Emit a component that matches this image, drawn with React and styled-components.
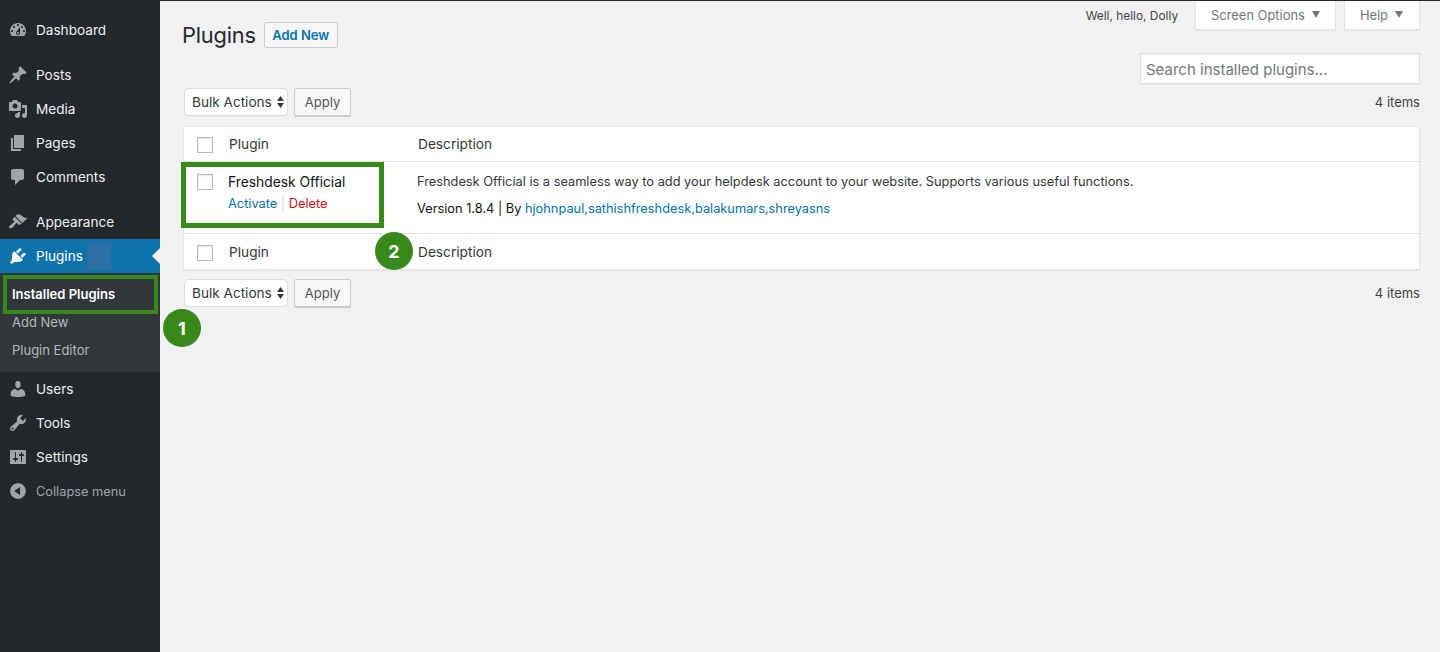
import React from 'react';
import styled, { createGlobalStyle } from 'styled-components';

const GlobalStyle = createGlobalStyle`
  html, body {
    margin: 0;
    padding: 0;
    background: #f1f1f1;
  }
  body {
    font-family: Inter, "Liberation Sans", sans-serif;
    color: #444;
    -webkit-font-smoothing: antialiased;
  }
  * {
    box-sizing: border-box;
  }
`;

const ICONS = {
  dashboard:
    'M3.76 16h12.48c1.1-1.37 1.76-3.11 1.76-5 0-4.42-3.58-8-8-8s-8 3.58-8 8c0 1.89.66 3.63 1.76 5zM10 4c.55 0 1 .45 1 1s-.45 1-1 1-1-.45-1-1 .45-1 1-1zM6 6c.55 0 1 .45 1 1s-.45 1-1 1-1-.45-1-1 .45-1 1-1zm8 0c.55 0 1 .45 1 1s-.45 1-1 1-1-.45-1-1 .45-1 1-1zm-5.37 5.55L12 7v6c0 1.1-.9 2-2 2s-2-.9-2-2c0-.57.24-1.08.63-1.45zM4 10c.55 0 1 .45 1 1s-.45 1-1 1-1-.45-1-1 .45-1 1-1zm12 0c.55 0 1 .45 1 1s-.45 1-1 1-1-.45-1-1 .45-1 1-1zm-5 3c0-.55-.45-1-1-1s-1 .45-1 1 .45 1 1 1 1-.45 1-1z',
  posts:
    'M10.44 3.02l1.82-1.82 6.36 6.35-1.83 1.82c-1.05-.68-2.48-.57-3.41.36l-.75.75c-.92.93-1.04 2.35-.35 3.41l-1.83 1.82-2.41-2.41-2.8 2.79c-.42.42-3.38 2.71-3.8 2.29s1.86-3.39 2.28-3.81l2.79-2.79L4.1 9.36l1.83-1.82c1.05.69 2.48.57 3.4-.36l.75-.75c.93-.92 1.05-2.35.36-3.41z',
  media:
    'M13 11V4c0-.55-.45-1-1-1h-1.67L9 1H5L3.67 3H2c-.55 0-1 .45-1 1v7c0 .55.45 1 1 1h10c.55 0 1-.45 1-1zM7 4.5c1.38 0 2.5 1.12 2.5 2.5S8.38 9.5 7 9.5 4.5 8.38 4.5 7 5.62 4.5 7 4.5zM14 6h5v10.5c0 1.38-1.12 2.5-2.5 2.5S14 17.88 14 16.5s1.12-2.5 2.5-2.5c.17 0 .34.02.5.05V9h-3V6zm-4 8.05V13h2v3.5c0 1.38-1.12 2.5-2.5 2.5S7 17.88 7 16.5 8.12 14 9.5 14c.17 0 .34.02.5.05z',
  pages: 'M6 15V2h10v13H6zm-1 1h8v2H3V5h2v11z',
  comments:
    'M5 2h9c1.1 0 2 .9 2 2v7c0 1.1-.9 2-2 2h-2l-5 5v-5H5c-1.1 0-2-.9-2-2V4c0-1.1.9-2 2-2z',
  appearance:
    'M14.48 11.06L7.41 3.99l1.5-1.5c.5-.56 2.3-.47 3.51.32 1.21.8 1.43 1.28 2.91 2.1 1.18.64 2.45 1.26 4.45.85zm-.71.71L6.7 4.7 4.93 6.47c-.39.39-.39 1.02 0 1.41l1.06 1.06c.39.39.39 1.03 0 1.42-.6.6-1.43 1.11-2.21 1.69-.35.26-.7.53-1.01.84C1.43 13.23.4 14.99 1.4 15.99c.99 1 2.76-.03 4.09-1.36.31-.31.58-.66.84-1.01.58-.78 1.09-1.61 1.69-2.21.39-.39 1.02-.39 1.41 0l1.06 1.06c.39.39 1.02.39 1.41 0z',
  plugins:
    'M13.11 4.36L9.87 7.6 8 5.73l3.24-3.24c.35-.34 1.05-.2 1.56.32.52.51.66 1.21.31 1.55zm-8 1.77l.91-1.12 9.01 9.01-1.19.84c-.71.71-2.63 1.16-3.82 1.16H6.14L4.9 17.26c-.59.59-1.54.59-2.12 0-.59-.58-.59-1.53 0-2.12l1.24-1.24v-3.88c0-1.13.4-3.19 1.09-3.89zm7.26 3.97l3.24-3.24c.34-.35 1.04-.21 1.55.31.52.51.66 1.21.31 1.55l-3.24 3.25z',
  users:
    'M10 9.25c-2.27 0-2.73-3.44-2.73-3.44C7 4.02 7.82 2 9.97 2c2.16 0 2.98 2.02 2.71 3.81 0 0-.41 3.44-2.68 3.44zm0 2.57L12.72 10c2.39 0 4.52 2.33 4.52 4.53v2.49s-3.65 1.13-7.24 1.13c-3.65 0-7.24-1.13-7.24-1.13v-2.49c0-2.25 1.94-4.48 4.47-4.48z',
  tools:
    'M16.68 9.77c-1.34 1.34-3.3 1.67-4.95.99l-5.41 6.52c-.99.99-2.59.99-3.58 0s-.99-2.59 0-3.57l6.52-5.42c-.68-1.65-.35-3.61.99-4.95 1.28-1.28 3.12-1.62 4.72-1.06l-2.89 2.89 2.82 2.82 2.86-2.87c.53 1.58.18 3.39-1.08 4.65zM3.81 16.21c.4.39 1.04.39 1.43 0 .4-.4.4-1.04 0-1.43-.39-.4-1.03-.4-1.43 0-.39.39-.39 1.03 0 1.43z',
  settings:
    'M18 16V4c0-.55-.45-1-1-1H3c-.55 0-1 .45-1 1v12c0 .55.45 1 1 1h14c.55 0 1-.45 1-1zM8 11h1c.55 0 1 .45 1 1s-.45 1-1 1H8v1.5c0 .28-.22.5-.5.5s-.5-.22-.5-.5V13H6c-.55 0-1-.45-1-1s.45-1 1-1h1V5.5c0-.28.22-.5.5-.5s.5.22.5.5V11zm5-2h-1c-.55 0-1-.45-1-1s.45-1 1-1h1V5.5c0-.28.22-.5.5-.5s.5.22.5.5V7h1c.55 0 1 .45 1 1s-.45 1-1 1h-1v5.5c0 .28-.22.5-.5.5s-.5-.22-.5-.5V9z',
  collapse:
    'M10 2.16c4.33 0 7.84 3.51 7.84 7.84s-3.51 7.84-7.84 7.84S2.16 14.33 2.16 10 5.71 2.16 10 2.16zm2 11.72V6.12L6.18 9.97z',
};

const GREEN = '#37891a';

const Page = styled.div`
  display: flex;
  min-height: 652px;
  border-top: 1px solid #23282d;
`;

const Sidebar = styled.nav`
  flex: 0 0 160px;
  padding-top: 12px;
  background: #23282d;
`;

const MenuGroup = styled.div`
  margin-bottom: 11px;
`;

const MenuItem = styled.div`
  position: relative;
  display: flex;
  align-items: center;
  height: 34px;
  padding-left: 8px;
  font-size: ${(p) => (p.$muted ? '12.8px' : '13.6px')};
  color: ${(p) => (p.$muted ? '#a0a5aa' : p.$active ? '#fff' : '#eee')};
  background: ${(p) => (p.$active ? '#0f72aa' : 'transparent')};
`;

const MenuIcon = styled.svg`
  flex: 0 0 20px;
  width: 20px;
  height: 20px;
  margin-right: 8px;
  fill: ${(p) => (p.$active ? '#fff' : '#a0a5aa')};
`;

const CountMask = styled.span`
  position: absolute;
  top: 4px;
  left: 87px;
  width: 24px;
  height: 27px;
  background: #2c6ea6;
`;

const ActiveArrow = styled.span`
  position: absolute;
  top: 50%;
  right: 0;
  margin-top: -8px;
  border: 8px solid transparent;
  border-right-color: #f1f1f1;
  border-left-width: 0;
`;

const Submenu = styled.div`
  position: relative;
  padding: 7px 0 8px;
  background: #32373c;
`;

const SubItem = styled.div`
  display: flex;
  align-items: center;
  height: 28px;
  padding-left: 12px;
  font-size: 13px;
  font-weight: ${(p) => (p.$current ? 600 : 400)};
  color: ${(p) => (p.$current ? '#fff' : '#b4b9be')};
`;

const Highlight = styled.div`
  position: absolute;
  border-style: solid;
  border-color: ${GREEN};
  pointer-events: none;
`;

const SubHighlight = styled(Highlight)`
  top: 2px;
  left: 3px;
  width: 155px;
  height: 39px;
  border-width: 4px;
`;

const RowHighlight = styled(Highlight)`
  top: 0;
  left: -3px;
  width: 203px;
  height: 66px;
  border-width: 5px;
`;

const Badge = styled.div`
  position: absolute;
  top: ${(p) => p.$top}px;
  left: ${(p) => p.$left}px;
  display: flex;
  align-items: center;
  justify-content: center;
  width: 38px;
  height: 38px;
  border-radius: 50%;
  font-size: 18px;
  font-weight: 700;
  color: #fff;
  background: ${GREEN};
`;

const Content = styled.main`
  position: relative;
  flex: 1;
  padding: 0 20px 0 23px;
`;

const ScreenMeta = styled.div`
  position: absolute;
  top: 0;
  right: 20px;
  display: flex;
  align-items: flex-start;
`;

const Greeting = styled.span`
  margin: 8px 17px 0 0;
  font-size: 11.9px;
  line-height: 14px;
  color: #444;
`;

const MetaTab = styled.div`
  display: flex;
  align-items: center;
  height: 29px;
  margin-left: ${(p) => (p.$gap ? '8px' : 0)};
  padding: 0 ${(p) => (p.$gap ? '16px' : '15px')} 0 15px;
  font-size: 12.9px;
  color: #72777c;
  background: #fff;
  border: 1px solid #e5e5e5;
  border-top: 0;
  box-shadow: 0 1px 1px rgba(0, 0, 0, 0.04);
`;

const Caret = styled.span`
  margin-left: 7px;
  margin-top: -2px;
  border: 4px solid transparent;
  border-top: 7px solid #72777c;
  border-bottom: 0;
`;

const TitleRow = styled.div`
  display: flex;
  align-items: center;
  height: 26px;
  margin: 21px 0 0 -1px;
`;

const Title = styled.h1`
  margin: 0 8px 0 0;
  font-size: 21.8px;
  font-weight: 400;
  line-height: 26px;
  letter-spacing: -0.2px;
  color: #23282d;
`;

const AddNew = styled.button`
  height: 26px;
  width: 74px;
  padding: 0;
  font: 600 13px Inter, "Liberation Sans", sans-serif;
  color: #0073aa;
  background: #f7f7f7;
  border: 1px solid #ccc;
  border-radius: 2px;
`;

const SearchRow = styled.div`
  display: flex;
  justify-content: flex-end;
  margin-top: 5px;
`;

const SearchBox = styled.div`
  display: flex;
  align-items: center;
  width: 280px;
  height: 31px;
  padding: 2px 0 0 5px;
  font-size: 15px;
  color: #72777c;
  background: #fff;
  border: 1px solid #ddd;
  box-shadow: inset 0 1px 2px rgba(0, 0, 0, 0.07);
`;

const NavRow = styled.div`
  display: flex;
  align-items: center;
  height: 28px;
  margin: ${(p) => (p.$bottom ? '9px 0 0' : '4px 0 10px')};
  padding-left: 1px;
`;

const SelectBox = styled.div`
  display: flex;
  align-items: center;
  justify-content: space-between;
  width: 104px;
  height: 28px;
  padding: 0 3px 0 7px;
  font-size: 13.6px;
  color: #32373c;
  background: #fff;
  border: 1px solid #ddd;
  border-radius: 5px;
`;

const SelectArrows = styled.svg`
  width: 7px;
  height: 14px;
  fill: #32373c;
`;

const ApplyButton = styled.button`
  width: 57px;
  height: 28px;
  margin-left: 6px;
  padding: 0;
  font: 400 13px Inter, "Liberation Sans", sans-serif;
  color: #555;
  background: #f7f7f7;
  border: 1px solid #ccc;
  border-radius: 2px;
  box-shadow: 0 1px 0 #ccc;
`;

const ItemCount = styled.span`
  margin-left: auto;
  font-size: 13px;
  color: #444;
`;

const Table = styled.div`
  background: #fff;
  border: 1px solid #e5e5e5;
  box-shadow: 0 1px 1px rgba(0, 0, 0, 0.04);
`;

const HeadRow = styled.div`
  display: flex;
  align-items: center;
  height: 35px;
  font-size: 13.7px;
  color: #32373c;
  border-bottom: ${(p) => (p.$footer ? 0 : '1px solid #e1e1e1')};
`;

const CheckCell = styled.div`
  display: flex;
  flex: 0 0 45px;
  padding-left: 13px;
`;

const HeadCheckCell = styled(CheckCell)`
  margin-top: 2px;
`;

const Checkbox = styled.span`
  display: block;
  width: 16px;
  height: 16px;
  background: #fff;
  border: 1px solid #b4b9be;
  box-shadow: inset 0 1px 2px rgba(0, 0, 0, 0.1);
`;

const HeadName = styled.div`
  flex: 0 0 189px;
`;

const PluginRow = styled.div`
  position: relative;
  display: flex;
  height: 72px;
  border-bottom: 1px solid #e1e1e1;
`;

const RowCheckCell = styled(CheckCell)`
  padding-top: 12px;
`;

const NameCell = styled.div`
  flex: 0 0 189px;
  margin-left: -1px;
  padding-top: 10px;
`;

const PluginName = styled.div`
  font-size: 13.8px;
  line-height: 20px;
  color: #111;
`;

const RowActions = styled.div`
  margin-top: 2px;
  font-size: 12.8px;
  line-height: 20px;
  color: #ddd;
`;

const ActionLink = styled.a`
  color: ${(p) => (p.$danger ? '#c5101f' : '#0073aa')};
`;

const DescCell = styled.div`
  flex: 1;
  padding-top: 10px;
  font-size: 12.8px;
  line-height: 20px;
  color: #32373c;
`;

const VersionLine = styled.div`
  margin-top: 7px;
  color: #111;
`;

const AuthorLink = styled.a`
  color: #0073aa;
`;

const sidebarTop = [
  [{ icon: 'dashboard', label: 'Dashboard' }],
  [
    { icon: 'posts', label: 'Posts' },
    { icon: 'media', label: 'Media' },
    { icon: 'pages', label: 'Pages' },
    { icon: 'comments', label: 'Comments' },
  ],
];

const sidebarBottom = [
  { icon: 'users', label: 'Users' },
  { icon: 'tools', label: 'Tools' },
  { icon: 'settings', label: 'Settings' },
];

function Icon({ name, active }) {
  return (
    <MenuIcon viewBox="0 0 20 20" $active={active}>
      <path fillRule="evenodd" d={ICONS[name]} />
    </MenuIcon>
  );
}

function Menu({ icon, label, active, muted, children }) {
  return (
    <MenuItem $active={active} $muted={muted}>
      <Icon name={icon} active={active} />
      <span>{label}</span>
      {children}
    </MenuItem>
  );
}

function BulkBar({ bottom }) {
  return (
    <NavRow $bottom={bottom}>
      <SelectBox>
        Bulk Actions
        <SelectArrows viewBox="0 0 7 14">
          <path d="M3.5 1 7 6H0zM3.5 13 0 8h7z" />
        </SelectArrows>
      </SelectBox>
      <ApplyButton>Apply</ApplyButton>
      <ItemCount>4 items</ItemCount>
    </NavRow>
  );
}

function App() {
  return (
    <>
      <GlobalStyle />
      <Page>
        <Sidebar>
          {sidebarTop.map((group) => (
            <MenuGroup key={group[0].label}>
              {group.map((item) => (
                <Menu key={item.label} icon={item.icon} label={item.label} />
              ))}
            </MenuGroup>
          ))}
          <Menu icon="appearance" label="Appearance" />
          <Menu icon="plugins" label="Plugins" active>
            <CountMask />
            <ActiveArrow />
          </Menu>
          <Submenu>
            <SubItem $current>Installed Plugins</SubItem>
            <SubItem>Add New</SubItem>
            <SubItem>Plugin Editor</SubItem>
            <SubHighlight />
          </Submenu>
          {sidebarBottom.map((item) => (
            <Menu key={item.label} icon={item.icon} label={item.label} />
          ))}
          <Menu icon="collapse" label="Collapse menu" muted />
        </Sidebar>
        <Content>
          <ScreenMeta>
            <Greeting>Well, hello, Dolly</Greeting>
            <MetaTab>
              Screen Options
              <Caret />
            </MetaTab>
            <MetaTab $gap>
              Help
              <Caret />
            </MetaTab>
          </ScreenMeta>
          <TitleRow>
            <Title>Plugins</Title>
            <AddNew>Add New</AddNew>
          </TitleRow>
          <SearchRow>
            <SearchBox>Search installed plugins...</SearchBox>
          </SearchRow>
          <BulkBar />
          <Table>
            <HeadRow>
              <HeadCheckCell>
                <Checkbox />
              </HeadCheckCell>
              <HeadName>Plugin</HeadName>
              <div>Description</div>
            </HeadRow>
            <PluginRow>
              <RowCheckCell>
                <Checkbox />
              </RowCheckCell>
              <NameCell>
                <PluginName>Freshdesk Official</PluginName>
                <RowActions>
                  <ActionLink>Activate</ActionLink> | <ActionLink $danger>Delete</ActionLink>
                </RowActions>
              </NameCell>
              <DescCell>
                Freshdesk Official is a seamless way to add your helpdesk account to your website. Supports various useful functions.
                <VersionLine>
                  Version 1.8.4 | By <AuthorLink>hjohnpaul,sathishfreshdesk,balakumars,shreyasns</AuthorLink>
                </VersionLine>
              </DescCell>
              <RowHighlight />
            </PluginRow>
            <HeadRow $footer>
              <HeadCheckCell>
                <Checkbox />
              </HeadCheckCell>
              <HeadName>Plugin</HeadName>
              <div>Description</div>
            </HeadRow>
          </Table>
          <BulkBar bottom />
          <Badge $top={231} $left={215}>2</Badge>
          <Badge $top={308} $left={3}>1</Badge>
        </Content>
      </Page>
    </>
  );
}

export default App;
